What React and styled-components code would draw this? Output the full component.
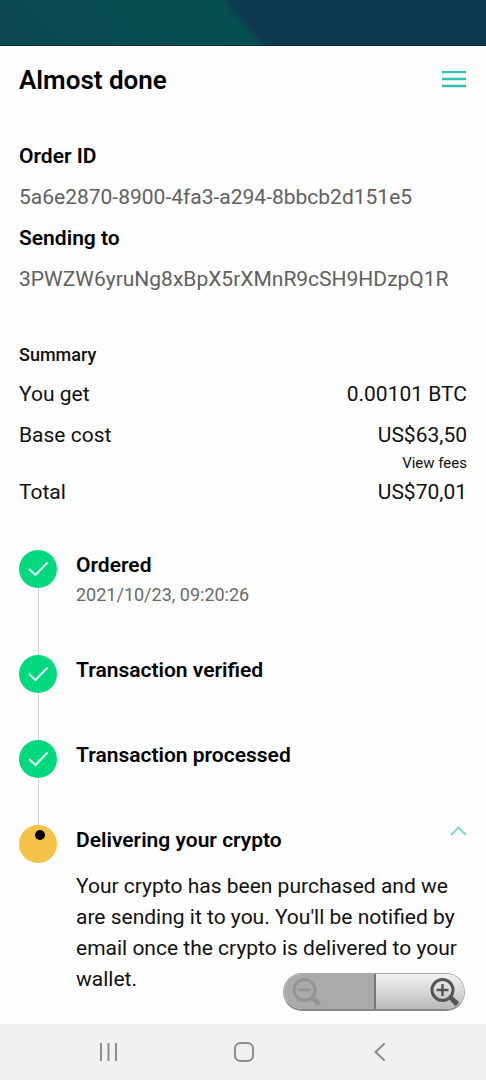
import React, { useState } from "react";
import styled, { createGlobalStyle } from "styled-components";

const summary = [
  { label: "You get", value: "0.00101 BTC" },
  { label: "Base cost", value: "US$63,50", fees: true },
  { label: "Total", value: "US$70,01" },
];

const steps = [
  { title: "Ordered", date: "2021/10/23, 09:20:26", done: true },
  { title: "Transaction verified", done: true },
  { title: "Transaction processed", done: true },
  {
    title: "Delivering your crypto",
    text: "Your crypto has been purchased and we are sending it to you. You'll be notified by email once the crypto is delivered to your wallet.",
  },
];

function StepIcon({ done }) {
  return (
    <svg width="38" height="38" viewBox="0 0 38 38" aria-hidden="true">
      <circle cx="19" cy="19" r="19" fill={done ? "#00d97e" : "#f4c244"} />
      {done ? (
        <path
          d="M10 19l6.5 6L28.5 12.5"
          fill="none"
          stroke="#e0fff0"
          strokeWidth="2.2"
        />
      ) : (
        <circle cx="21" cy="10" r="5" fill="#000" />
      )}
    </svg>
  );
}

function Magnifier({ plus }) {
  return (
    <svg width="30" height="30" viewBox="0 0 30 30" aria-hidden="true">
      <path d="M19 19l2-1 8 7-2 3-2 1-7-8z" fill="currentColor" />
      <circle
        cx="12.5"
        cy="13"
        r="10.5"
        fill="none"
        stroke="currentColor"
        strokeWidth="3"
      />
      <path
        d={plus ? "M6.5 13h12M12.5 7v12" : "M6.5 13h12"}
        stroke="currentColor"
        strokeWidth="2.4"
      />
    </svg>
  );
}

function Step({ title, date, text, done }) {
  const [open, setOpen] = useState(true);

  return (
    <StepItem>
      <StepMark>
        <StepIcon done={done} />
      </StepMark>
      <StepBody>
        <StepHead>
          <Label as="h3">{title}</Label>
          {text && (
            <IconButton
              aria-label="Toggle details"
              aria-expanded={open}
              onClick={() => setOpen(!open)}
            >
              <svg width="17" height="12" viewBox="0 0 17 12">
                <path
                  d="M1 10l7.5-7.5L16 10"
                  fill="none"
                  stroke="#7fdccf"
                  strokeWidth="2"
                />
              </svg>
            </IconButton>
          )}
        </StepHead>
        {date && <StepDate>{date}</StepDate>}
        {text && open && <StepText>{text}</StepText>}
      </StepBody>
    </StepItem>
  );
}

function App() {
  return (
    <Screen>
      <GlobalStyle />
      <Banner />
      <Header>
        <Title>Almost done</Title>
        <IconButton aria-label="Menu">
          <svg width="26" height="18" viewBox="0 0 26 18">
            <path
              d="M1 1h24M1 8h24M1 15h24"
              stroke="#35c2b4"
              strokeWidth="2.4"
            />
          </svg>
        </IconButton>
      </Header>
      <Content>
        <Details>
          <Label>Order ID</Label>
          <DetailValue>5a6e2870-8900-4fa3-a294-8bbcb2d151e5</DetailValue>
          <Label>Sending to</Label>
          <DetailValue>3PWZW6yruNg8xBpX5rXMnR9cSH9HDzpQ1R</DetailValue>
        </Details>
        <SummaryTitle>Summary</SummaryTitle>
        {summary.map(({ label, value, fees }) => (
          <SummaryRow key={label} $tight={fees}>
            <span>{label}</span>
            <Amount>
              {value}
              {fees && <FeesButton>View fees</FeesButton>}
            </Amount>
          </SummaryRow>
        ))}
        <StepList>
          {steps.map((step) => (
            <Step key={step.title} {...step} />
          ))}
        </StepList>
      </Content>
      <ZoomControls>
        <ZoomButton aria-label="Zoom out" disabled>
          <Magnifier />
        </ZoomButton>
        <ZoomButton aria-label="Zoom in">
          <Magnifier plus />
        </ZoomButton>
      </ZoomControls>
      <NavBar>
        <NavButton aria-label="Recent apps">
          <svg width="20" height="20" viewBox="0 0 20 20">
            <path d="M2 1v18M9.5 1v18M17 1v18" />
          </svg>
        </NavButton>
        <NavButton aria-label="Home">
          <svg width="20" height="20" viewBox="0 0 20 20">
            <rect x="1" y="1" width="18" height="18" rx="5.5" />
          </svg>
        </NavButton>
        <NavButton aria-label="Back">
          <svg width="20" height="20" viewBox="0 0 20 20">
            <path d="M15.5 1.5L6.5 10l9 8.5" />
          </svg>
        </NavButton>
      </NavBar>
    </Screen>
  );
}

const GlobalStyle = createGlobalStyle`
  * {
    box-sizing: border-box;
    margin: 0;
    padding: 0;
  }
  body {
    background: #fefefe;
    color: #111;
    font-family: Roboto, sans-serif;
    font-size: 21px;
    line-height: 31px;
  }
  button {
    border: none;
    background: none;
    color: inherit;
    font: inherit;
    cursor: pointer;
  }
  svg {
    display: block;
  }
`;

const Screen = styled.div`
  position: relative;
  display: flex;
  flex-direction: column;
  min-height: 100vh;
`;

const Banner = styled.div`
  height: 46px;
  border-bottom: 1px solid #0c2a3c;
  background: linear-gradient(
    50deg,
    #0c4850 0%,
    #064f50 49%,
    #0d394f 51%,
    #0d394f 100%
  );
`;

const Header = styled.header`
  display: flex;
  align-items: center;
  justify-content: space-between;
  height: 68px;
  padding: 0 19px;
`;

const Title = styled.h1`
  color: #000;
  font-size: 26px;
  font-weight: 600;
`;

const IconButton = styled.button`
  display: grid;
  place-items: center;
`;

const Content = styled.main`
  flex: 1;
  padding: 27px 19px 29px;
`;

const Details = styled.section`
  display: flex;
  flex-direction: column;
  gap: 10px;
  margin-bottom: 44px;
`;

const Label = styled.h2`
  color: #000;
  font-size: 21px;
  font-weight: 600;
`;

const DetailValue = styled.p`
  color: #606060;
  overflow-wrap: anywhere;
`;

const SummaryTitle = styled.h2`
  margin-bottom: 9px;
  font-size: 18px;
  font-weight: 500;
`;

const SummaryRow = styled.div`
  display: flex;
  justify-content: space-between;
  margin-bottom: ${({ $tight }) => ($tight ? 2 : 10)}px;
`;

const Amount = styled.div`
  display: flex;
  flex-direction: column;
  align-items: flex-end;
`;

const FeesButton = styled.button`
  font-size: 15px;
  line-height: 24px;
`;

const StepList = styled.ol`
  margin-top: 42px;
  list-style: none;
`;

const StepItem = styled.li`
  display: flex;
  gap: 19px;
  &:not(:last-child) {
    min-height: 85px;
  }
`;

const StepMark = styled.div`
  display: flex;
  flex-direction: column;
  align-items: center;
  ${StepItem}:not(:last-child) &::after {
    content: "";
    flex: 1;
    width: 1px;
    background: #d2d2d2;
  }
`;

const StepBody = styled.div`
  flex: 1;
`;

const StepHead = styled.div`
  display: flex;
  justify-content: space-between;
  ${IconButton} {
    height: 12px;
  }
`;

const StepDate = styled.p`
  padding-bottom: 47px;
  color: #6a6a6a;
  font-size: 18px;
  line-height: 27px;
`;

const StepText = styled.p`
  margin-top: 15px;
`;

const ZoomControls = styled.div`
  position: absolute;
  right: 21px;
  bottom: 69px;
  display: flex;
  width: 182px;
  height: 38px;
  overflow: hidden;
  border: 1px solid #a6a6a6;
  border-bottom: 2px solid #8a8a8a;
  border-radius: 19px;
`;

const ZoomButton = styled.button`
  display: flex;
  flex: 1 1 0;
  min-width: 0;
  align-items: center;
  justify-content: flex-end;
  padding: 0 4px;
  background: linear-gradient(#f0f0f0, #d8d8d8 50%, #b8b8b8);
  color: #555;
  &:disabled {
    flex: 0 0 51%;
    justify-content: flex-start;
    padding: 0 8px;
    border-right: 2px solid #777;
    background: #aaa;
    color: #949494;
  }
`;

const NavBar = styled.nav`
  display: flex;
  height: 56px;
  padding: 0 39px 0 41px;
  background: #f0f0f0;
`;

const NavButton = styled.button`
  display: grid;
  place-items: center;
  flex: 1;
  svg {
    fill: none;
    stroke: #8c8c8c;
    stroke-width: 2;
  }
`;

export default App;
